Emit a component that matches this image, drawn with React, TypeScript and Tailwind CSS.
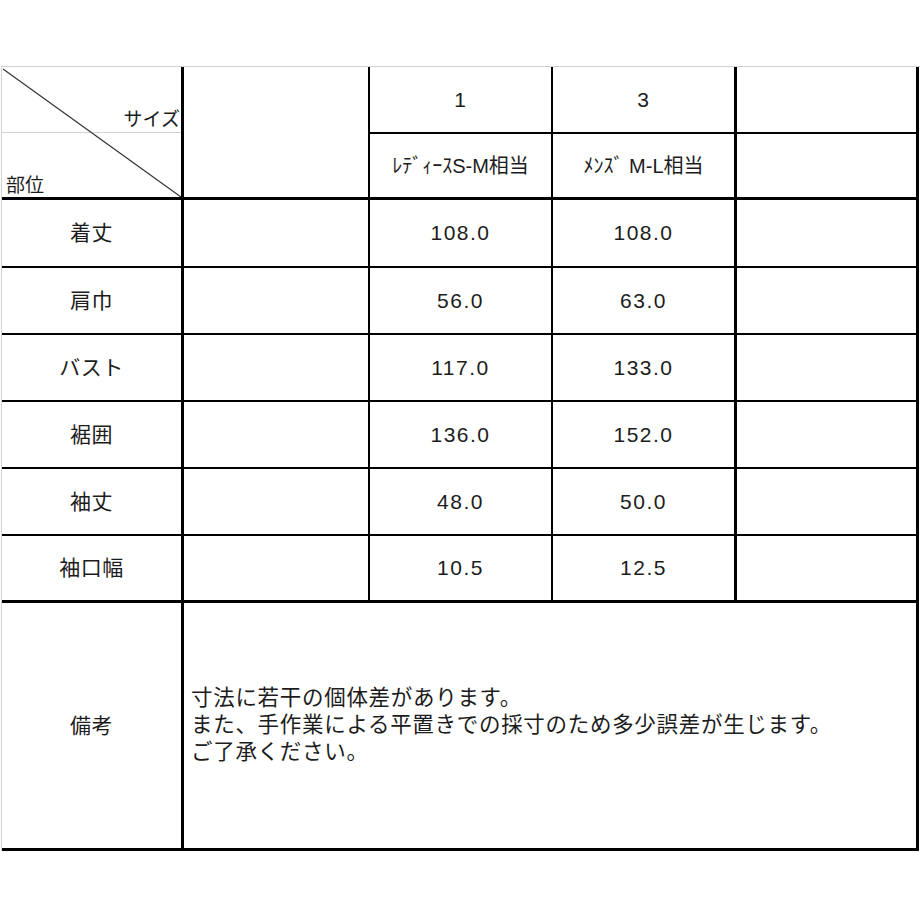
const font = "font-['Liberation_Sans','Noto_Sans_CJK_JP',sans-serif]";

const rows = [
  { label: "着丈", a: "108.0", b: "108.0" },
  { label: "肩巾", a: "56.0", b: "63.0" },
  { label: "バスト", a: "117.0", b: "133.0" },
  { label: "裾囲", a: "136.0", b: "152.0" },
  { label: "袖丈", a: "48.0", b: "50.0" },
  { label: "袖口幅", a: "10.5", b: "12.5" },
];

export default function App() {
  return (
    <div className={`w-[920px] h-[920px] bg-white text-[#1c1c1c] ${font}`}>
      <div className="pt-[66px]">
        <div className="ml-px border-l border-t border-[#d2d2d2]">
          <div className="grid grid-cols-[182px_186px_183px_184px_182px] grid-rows-[67px_66px_68px_67px_67px_67px_67px_67px_248px]">
            {/* corner cell with diagonal */}
            <div className="row-span-2 relative border-r-[3px] border-b-[3px] border-black flex flex-col">
              <div className="h-[66px] border-b border-[#d2d2d2] flex items-end justify-end pr-[1px] pb-[1px] text-[19px] leading-[22px]">
                サイズ
              </div>
              <div className="flex-1 flex items-end pl-[4px] text-[19px] leading-[22px]">
                部位
              </div>
              <svg
                className="absolute inset-0 w-full h-full pointer-events-none"
                viewBox="0 0 179 130"
                preserveAspectRatio="none"
              >
                <line x1="1" y1="2" x2="179" y2="130" stroke="#333" strokeWidth="1.2" />
              </svg>
            </div>
            <div className="row-span-2 border-r-2 border-b-[3px] border-black" />
            <div className="border-r-2 border-b-2 border-black flex items-center justify-center text-[21px] tracking-[1px]">
              1
            </div>
            <div className="border-r-[3px] border-b-2 border-black flex items-center justify-center text-[21px] tracking-[1px]">
              3
            </div>
            <div className="border-r-[3px] border-b-2 border-black" />

            <div className="border-r-2 border-b-[3px] border-black flex items-center justify-center text-[20px]">
              ﾚﾃﾞｨｰｽS-M相当
            </div>
            <div className="border-r-[3px] border-b-[3px] border-black flex items-center justify-center text-[20px]">
              ﾒﾝｽﾞ M-L相当
            </div>
            <div className="border-r-[3px] border-b-[3px] border-black" />

            {rows.map((r, i) => {
              const last = i === rows.length - 1;
              const bb = last ? "border-b-[3px]" : "border-b-2";
              return [
                <div
                  key={r.label + "l"}
                  className={`border-r-[3px] ${bb} border-black flex items-center justify-center text-[21px] tracking-[0.5px]`}
                >
                  {r.label}
                </div>,
                <div key={r.label + "e"} className={`border-r-2 ${bb} border-black`} />,
                <div
                  key={r.label + "a"}
                  className={`border-r-2 ${bb} border-black flex items-center justify-center text-[21px] tracking-[1.5px]`}
                >
                  {r.a}
                </div>,
                <div
                  key={r.label + "b"}
                  className={`border-r-[3px] ${bb} border-black flex items-center justify-center text-[21px] tracking-[1.5px]`}
                >
                  {r.b}
                </div>,
                <div key={r.label + "x"} className={`border-r-[3px] ${bb} border-black`} />,
              ];
            })}

            <div className="border-r-[3px] border-b-[3px] border-black flex items-center justify-center text-[21px] tracking-[0.5px]">
              備考
            </div>
            <div className="col-span-4 border-r-[3px] border-b-[3px] border-black flex items-center pl-[7px] text-[21.5px] leading-[27px] tracking-[0.7px]">
              <div>
                寸法に若干の個体差があります。
                <br />
                また、手作業による平置きでの採寸のため多少誤差が生じます。
                <br />
                ご了承ください。
              </div>
            </div>
          </div>
        </div>
      </div>
    </div>
  );
}
